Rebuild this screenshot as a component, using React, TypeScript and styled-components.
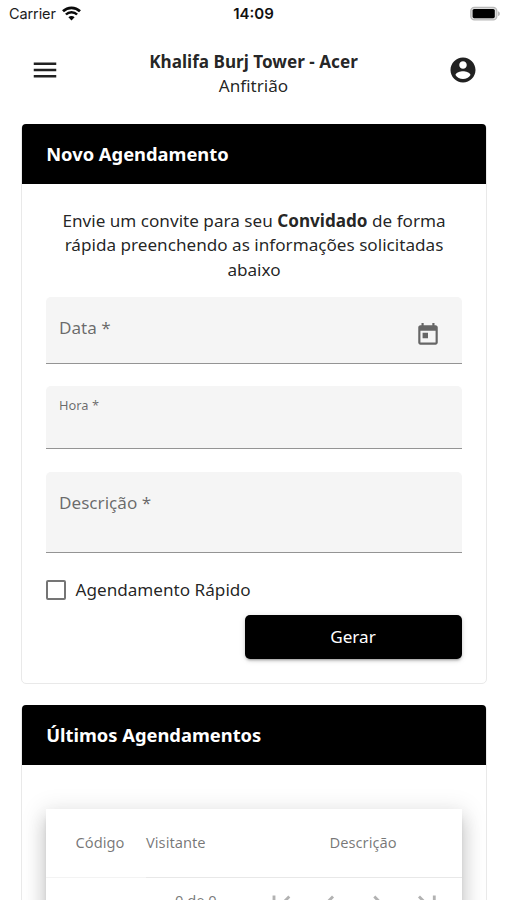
import React from "react";
import styled, { createGlobalStyle } from "styled-components";

const GlobalStyle = createGlobalStyle`
  *, *::before, *::after { box-sizing: border-box; }
  html, body { margin: 0; padding: 0; background: #fff; overflow: hidden; }
  body { font-family: "Noto Sans", sans-serif; color: rgba(0, 0, 0, 0.87); }
`;

const Screen = styled.div`
  width: 507px;
  height: 900px;
  overflow: hidden;
  background: #fff;
  display: flex;
  flex-direction: column;
`;

const StatusBar = styled.div`
  height: 27px;
  flex: none;
  display: grid;
  grid-template-columns: 1fr auto 1fr;
  align-items: center;
  padding: 0 7px 0 9px;
  font-family: Inter, sans-serif;
  font-size: 14.5px;
  line-height: 27px;
  color: #1c1c1c;
`;

const Carrier = styled.div`
  display: flex;
  align-items: center;
  gap: 6px;
  letter-spacing: -0.1px;
`;

const Clock = styled.div`
  margin-right: 2px;
  font-size: 15px;
  font-weight: 600;
  color: #111;
`;

const BatterySlot = styled.div`
  display: flex;
  justify-content: flex-end;
`;

const AppBar = styled.header`
  height: 97px;
  flex: none;
  display: flex;
  justify-content: space-between;
  padding: 22px 29px 0 30px;
`;

const IconButton = styled.button`
  width: 30px;
  height: 30px;
  margin-top: 5.5px;
  padding: 0;
  border: 0;
  background: none;
  color: #212121;
  svg { display: block; }
`;

const Place = styled.div`
  text-align: center;
  font-size: 17.14px;
  line-height: 24.5px;
  margin-right: 1px;

  strong {
    display: block;
    padding-top: 1px;
    margin-bottom: -1px;
  }
`;

const Cards = styled.main`
  display: flex;
  flex-direction: column;
  gap: 21px;
  padding: 0 20px 0 21px;
`;

const Card = styled.section<{ $height: number }>`
  height: ${(p) => p.$height}px;
  flex: none;
  border: 1px solid #e9e9e9;
  border-radius: 5px;
  background: #fff;
`;

const CardTitle = styled.h2`
  height: 60px;
  margin: -1px 0 0 -0.5px;
  padding-left: 24.7px;
  border-radius: 4px 4px 0 0;
  background: #000;
  color: #fff;
  font-size: 18.33px;
  font-weight: 700;
  line-height: 60px;
`;

const CardBody = styled.div`
  display: flex;
  flex-direction: column;
  padding: 24px 24px 0;
`;

const Intro = styled.p`
  margin: 0 0 14.5px;
  padding-top: 0.7px;
  font-size: 17.14px;
  line-height: 24.5px;
  text-align: center;
`;

const Field = styled.div<{ $height: number; $gap: number }>`
  height: ${(p) => p.$height}px;
  margin-bottom: ${(p) => p.$gap}px;
  display: flex;
  justify-content: space-between;
  padding: 0 20.8px 0 13px;
  border-bottom: 1px solid #949494;
  border-radius: 5px 5px 0 0;
  background: #f5f5f5;
`;

const Label = styled.label<{ $floating?: boolean }>`
  margin-top: ${(p) => (p.$floating ? 10 : 19)}px;
  font-size: ${(p) => (p.$floating ? 12.86 : 17.14)}px;
  line-height: ${(p) => (p.$floating ? 18 : 24)}px;
  color: rgba(0, 0, 0, 0.58);
`;

const CalendarSlot = styled.span`
  margin-top: 25px;
  color: #666;
  svg { display: block; }
`;

const CheckRow = styled.label`
  display: flex;
  align-items: center;
  gap: 9.5px;
  height: 24px;
  font-size: 17.14px;
  line-height: 24px;
`;

const CheckBox = styled.span`
  width: 20px;
  height: 20px;
  border: 2px solid #757575;
  border-radius: 2px;
`;

const SubmitButton = styled.button`
  align-self: flex-end;
  width: 217px;
  height: 44px;
  margin-top: 12.8px;
  padding: 0 1px 0 0;
  border: 0;
  border-radius: 5px;
  background: #000;
  color: #fff;
  font: 400 17.14px/44px "Noto Sans", sans-serif;
  box-shadow: 0 3px 2px -2px rgba(0, 0, 0, 0.2), 0 2px 3px rgba(0, 0, 0, 0.14),
    0 1px 6px rgba(0, 0, 0, 0.12);
`;

const TableCard = styled.div`
  margin-top: 20px;
  height: 140px;
  background: #fff;
  box-shadow: 0 6px 6px -3px rgba(0, 0, 0, 0.2), 0 12px 17px 1px rgba(0, 0, 0, 0.14),
    0 4px 22px 4px rgba(0, 0, 0, 0.1);
`;

const HeadRow = styled.div`
  display: grid;
  grid-template-columns: 100px 183.5px 1fr;
  height: 69px;
  font-size: 14.69px;
  line-height: 66px;
  color: rgba(0, 0, 0, 0.54);
`;

const HeadCell = styled.span<{ $first?: boolean }>`
  padding-left: ${(p) => (p.$first ? 29.5 : 0)}px;
  border-bottom: 1px solid ${(p) => (p.$first ? "#f3f3f3" : "#e8e8e8")};
`;

const Paginator = styled.div`
  display: flex;
  padding: 9px 16px 0 129px;
  font-size: 14.69px;
  line-height: 26px;
  color: rgba(0, 0, 0, 0.54);
`;

const Range = styled.span`
  width: 88.5px;
`;

const PageButtons = styled.div`
  display: flex;
  gap: 14.7px;
  color: rgba(0, 0, 0, 0.3);
  svg { display: block; flex: none; }
`;

const PAGE_ICONS = [
  "M18.41 16.59L13.82 12l4.59-4.59L17 6l-6 6 6 6zM6 6h2v12H6z",
  "M15.41 7.41L14 6l-6 6 6 6 1.41-1.41L10.83 12z",
  "M10 6L8.59 7.41 13.17 12l-4.58 4.59L10 18l6-6z",
  "M5.59 7.41L10.18 12l-4.59 4.59L7 18l6-6-6-6zM16 6h2v12h-2z",
];

function MaterialIcon({ d, size }: { d: string; size: number }) {
  return (
    <svg width={size} height={size} viewBox="0 0 24 24" fill="currentColor">
      <path d={d} />
    </svg>
  );
}

function WifiIcon() {
  return (
    <svg width="19" height="15" viewBox="0 0 19 15" fill="none" stroke="#0a0a0a">
      <path d="M1 5.3a12.2 12.2 0 0 1 17 0" strokeWidth="2.7" />
      <path d="M3.9 8.5a7.8 7.8 0 0 1 11.2 0" strokeWidth="2.5" />
      <path d="M9.5 14.4L6.4 11.3a4.4 4.4 0 0 1 6.2 0z" fill="#0a0a0a" stroke="none" />
    </svg>
  );
}

function BatteryIcon() {
  return (
    <svg width="31" height="16" viewBox="0 0 31 16">
      <rect x="1.8" y="1.3" width="26" height="12.6" rx="3.6" fill="#ddd" stroke="#b9b9b9" strokeWidth="1.3" />
      <rect x="3.6" y="3" width="22.2" height="9.2" rx="1.6" fill="#000" />
      <path d="M29.2 5.3c2 .7 2 4 0 4.7z" fill="#aaa" />
    </svg>
  );
}

export default function App() {
  return (
    <>
      <GlobalStyle />
      <Screen>
        <StatusBar>
          <Carrier>
            Carrier
            <WifiIcon />
          </Carrier>
          <Clock>14:09</Clock>
          <BatterySlot>
            <BatteryIcon />
          </BatterySlot>
        </StatusBar>
        <AppBar>
          <IconButton aria-label="Menu">
            <MaterialIcon size={30} d="M3 18h18v-2H3v2zm0-5h18v-2H3v2zm0-7v2h18V6H3z" />
          </IconButton>
          <Place>
            <strong>Khalifa Burj Tower - Acer</strong>
            Anfitrião
          </Place>
          <IconButton aria-label="Conta">
            <MaterialIcon
              size={30}
              d="M12 2C6.48 2 2 6.48 2 12s4.48 10 10 10 10-4.48 10-10S17.52 2 12 2zm0 3c1.66 0 3 1.34 3 3s-1.34 3-3 3-3-1.34-3-3 1.34-3 3-3zm0 14.2c-2.5 0-4.71-1.28-6-3.22.03-1.99 4-3.08 6-3.08 1.99 0 5.97 1.09 6 3.08-1.29 1.94-3.5 3.22-6 3.22z"
            />
          </IconButton>
        </AppBar>
        <Cards>
          <Card $height={560}>
            <CardTitle>Novo Agendamento</CardTitle>
            <CardBody>
              <Intro>
                Envie um convite para seu <strong>Convidado</strong> de forma rápida preenchendo as
                informações solicitadas abaixo
              </Intro>
              <Field $height={67} $gap={22.5}>
                <Label>Data *</Label>
                <CalendarSlot>
                  <MaterialIcon
                    size={26}
                    d="M19 3h-1V1h-2v2H8V1H6v2H5c-1.11 0-1.99.9-1.99 2L3 19c0 1.1.89 2 2 2h14c1.1 0 2-.9 2-2V5c0-1.1-.9-2-2-2zm0 16H5V8h14v11zM7 10h5v5H7z"
                  />
                </CalendarSlot>
              </Field>
              <Field $height={63} $gap={23}>
                <Label $floating>Hora *</Label>
              </Field>
              <Field $height={80.5} $gap={25.5}>
                <Label>Descrição *</Label>
              </Field>
              <CheckRow>
                <CheckBox />
                Agendamento Rápido
              </CheckRow>
              <SubmitButton>Gerar</SubmitButton>
            </CardBody>
          </Card>
          <Card $height={260}>
            <CardTitle>Últimos Agendamentos</CardTitle>
            <CardBody>
              <TableCard>
                <HeadRow>
                  <HeadCell $first>Código</HeadCell>
                  <HeadCell>Visitante</HeadCell>
                  <HeadCell>Descrição</HeadCell>
                </HeadRow>
                <Paginator>
                  <Range>0 de 0</Range>
                  <PageButtons>
                    {PAGE_ICONS.map((d) => (
                      <MaterialIcon key={d} d={d} size={34.3} />
                    ))}
                  </PageButtons>
                </Paginator>
              </TableCard>
            </CardBody>
          </Card>
        </Cards>
      </Screen>
    </>
  );
}
